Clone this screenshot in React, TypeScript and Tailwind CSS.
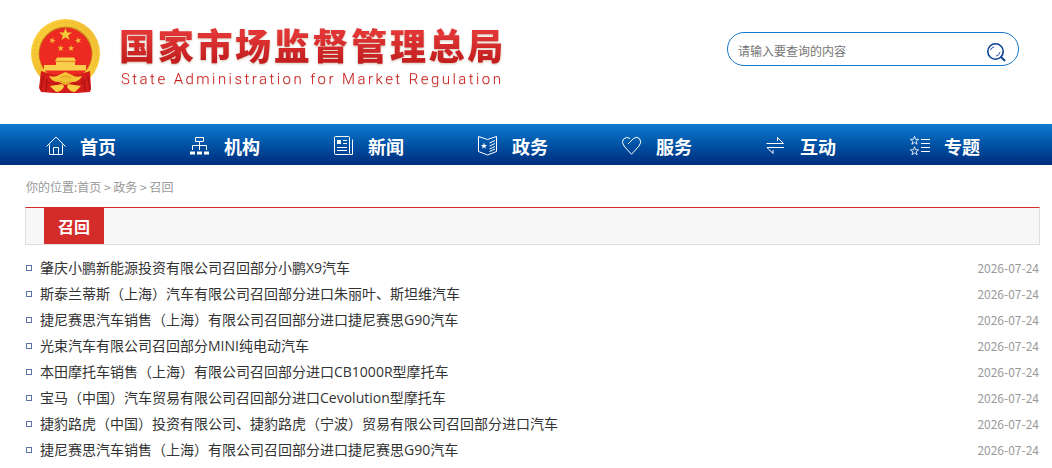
import React from "react";

const STAR =
  "M0,-10 L2.35,-3.24 L9.51,-3.09 L3.8,1.24 L5.88,8.09 L0,4 L-5.88,8.09 L-3.8,1.24 L-9.51,-3.09 L-2.35,-3.24 Z";

function Emblem() {
  return (
    <svg width="72" height="76" viewBox="0 0 72 76" className="block">
      <defs>
        <linearGradient id="gold" x1="0" y1="0" x2="1" y2="1">
          <stop offset="0" stopColor="#fcd33c" />
          <stop offset="0.5" stopColor="#f2bf33" />
          <stop offset="1" stopColor="#f8cf3a" />
        </linearGradient>
      </defs>
      <circle cx="35.5" cy="34.5" r="34.5" fill="url(#gold)" />
      <circle cx="35.5" cy="34.5" r="31" fill="none" stroke="#e3ad2c" strokeWidth="0.7" strokeDasharray="2 2" />
      <circle cx="35.5" cy="34.5" r="27" fill="#c98a1c" />
      <circle cx="35.5" cy="35" r="26.2" fill="#ec2a22" />
      <path d={STAR} transform="translate(35.5 15.6) scale(0.68)" fill="#f5cc38" />
      <path d={STAR} transform="translate(22.3 21.5) scale(0.34) rotate(15)" fill="#f5b838" />
      <path d={STAR} transform="translate(48.2 21.5) scale(0.34) rotate(-15)" fill="#f5b838" />
      <path d={STAR} transform="translate(30.7 29.3) scale(0.34)" fill="#f5b838" />
      <path d={STAR} transform="translate(41.1 29.3) scale(0.34)" fill="#f5b838" />
      <path d="M27 38.5 H44 L46 42 H25 Z M26 42.5 H45 V46 H56 V51.5 H14 V46 H26 Z" fill="#f9ce4a" />
      <path d="M25 42.3 H46" stroke="#d78f24" strokeWidth="0.7" />
      <path d="M11 52 L20 55 L30 56 H41 L51 55 L60 52 L61 69 L60 73 L47 74 H24 L11 73 L9 69 Z" fill="#d41d1b" />
      <path d="M13 57 L11 71 M17 60 L16 72 M58 57 L60 71 M54 60 L55 72" stroke="#a31413" strokeWidth="1.2" />
      <path
        d="M19 57 Q25 59 29 56 L35.5 53 L42 56 Q46 59 52 57 Q49 63 42 63 L35.5 66 L29 63 Q22 63 19 57 Z"
        fill="url(#gold)"
      />
      <path d="M30.5 59 Q35.5 55 40.5 59 M30.5 62 Q35.5 66 40.5 62" stroke="#cf921c" strokeWidth="0.8" fill="none" />
      <path d="M33 65 L20 67 L23 70 L26 73 Q31 73 34 68 Z M38 65 L51 67 L48 70 L45 73 Q40 73 37 68 Z" fill="#f8cd42" />
      <path d="M12 59 Q18 65 28 65 M59 59 Q53 65 43 65" stroke="#b91a16" strokeWidth="1.3" fill="none" />
    </svg>
  );
}

function HomeIcon() {
  return (
    <>
      <path d="M0.5 10.5 L10 1 L19.5 10.5" />
      <path d="M3.5 8.5 V18.5 H16.5 V8.5" />
      <path d="M7.5 18 V11.5 H12.5 V18" />
    </>
  );
}

function OrgIcon() {
  return (
    <>
      <path d="M5.5 1.5 H13.5 V5.5 H5.5 Z M9.5 5.5 V14 M2.5 14 V9.5 H16.5 V14" />
      <path d="M0 15.5 H5 V18.5 H0 Z M7 15.5 H12 V18.5 H7 Z M14 15.5 H19 V18.5 H14 Z" fill="white" stroke="none" />
    </>
  );
}

function NewsIcon() {
  return (
    <>
      <rect x="0.5" y="0.5" width="15" height="18" rx="1" />
      <path d="M15.5 18.5 H18.5 V3.5" />
      <path d="M3 4 H7 V8 H3 Z" fill="white" stroke="none" />
      <path d="M9 4.5 H13 M9 7.5 H13 M3 11.5 H13 M3 14.5 H13" />
    </>
  );
}

function PolicyIcon() {
  return (
    <>
      <path d="M0.5 0.5 L9.5 3.5 L18.5 0.5 V15.5 L9.5 19 L0.5 15.5 Z" />
      <path d="M11.5 7 L17 4.5 M11.5 10 L17 7.5 M11.5 13 L17 10.5 M11.5 15.5 L17 13" />
      <path d={STAR} transform="translate(6 10) scale(0.34)" fill="white" stroke="none" />
    </>
  );
}

function HeartIcon() {
  return (
    <path d="M6 8 L11.5 2.5 Q15 -0.2 17.7 2.8 Q20.2 6.5 17 10 L9.5 18.3 L2 10 Q-1 6 1.5 3 Q4.5 0 8 2.5" />
  );
}

function ExchangeIcon() {
  return (
    <>
      <path d="M0.5 7.5 H17.5 L11.5 1.5 V5" />
      <path d="M18 11.5 H1 L7 17.5 V14" />
    </>
  );
}

function TopicIcon() {
  return (
    <>
      <path d={STAR} transform="translate(4.5 4.7) scale(0.44)" strokeWidth="1.9" />
      <path d={STAR} transform="translate(4.5 15.2) scale(0.44)" strokeWidth="1.9" />
      <path d="M11 3.5 H20 M11 7.5 H20 M11 11.5 H20 M11 15.5 H20" />
    </>
  );
}

const navItems = [
  { name: "首页", icon: HomeIcon },
  { name: "机构", icon: OrgIcon },
  { name: "新闻", icon: NewsIcon },
  { name: "政务", icon: PolicyIcon },
  { name: "服务", icon: HeartIcon },
  { name: "互动", icon: ExchangeIcon },
  { name: "专题", icon: TopicIcon },
];

const recalls = [
  { title: "肇庆小鹏新能源投资有限公司召回部分小鹏X9汽车", date: "2026-07-24" },
  { title: "斯泰兰蒂斯（上海）汽车有限公司召回部分进口朱丽叶、斯坦维汽车", date: "2026-07-24" },
  { title: "捷尼赛思汽车销售（上海）有限公司召回部分进口捷尼赛思G90汽车", date: "2026-07-24" },
  { title: "光束汽车有限公司召回部分MINI纯电动汽车", date: "2026-07-24" },
  { title: "本田摩托车销售（上海）有限公司召回部分进口CB1000R型摩托车", date: "2026-07-24" },
  { title: "宝马（中国）汽车贸易有限公司召回部分进口Cevolution型摩托车", date: "2026-07-24" },
  { title: "捷豹路虎（中国）投资有限公司、捷豹路虎（宁波）贸易有限公司召回部分进口汽车", date: "2026-07-24" },
  { title: "捷尼赛思汽车销售（上海）有限公司召回部分进口捷尼赛思G90汽车", date: "2026-07-24" },
];

function Header() {
  return (
    <header className="flex h-[124px] items-start justify-between pl-[30px] pr-[33px]">
      <div className="flex pt-[19px]">
        <Emblem />
        <div className="ml-[17px] pt-[5px] whitespace-nowrap">
          <h1 className="h-[45px] bg-gradient-to-b from-[#e23636] from-20% to-[#c01a1c] to-90% bg-clip-text text-[36px] leading-[41px] font-black tracking-[2.7px] text-transparent drop-shadow-[0_1px_1px_rgba(150,100,60,0.4)]">
            国家市场监督管理总局
          </h1>
          <p className="ml-[2px] h-[20px] font-['Roboto',sans-serif] text-[15px] leading-[20px] font-light tracking-[2.45px] text-[#cc1818] drop-shadow-[0_1px_0.5px_rgba(150,100,60,0.25)]">
            State Administration for Market Regulation
          </p>
        </div>
      </div>
      <div className="mt-[32px] flex h-[34px] w-[292px] items-center justify-between rounded-full border border-[#1479cc] pr-[12px] pl-[10px]">
        <input
          type="text"
          placeholder="请输入要查询的内容"
          className="w-[200px] pt-[3px] text-xs outline-none placeholder:text-[#757575]"
        />
        <svg width="19" height="19" viewBox="0 0 19 19" fill="none" stroke="#0d4494" className="mt-[6px]">
          <circle cx="8.5" cy="8.5" r="7.7" strokeWidth="1.6" />
          <path d="M13.5 13.5 L18 18" strokeWidth="2" />
          <path d="M3.5 7 Q4.5 4.5 7 4 M9 13 Q12.5 12.5 13 9" strokeWidth="0.9" />
        </svg>
      </div>
    </header>
  );
}

export default function App() {
  return (
    <div className="h-[468px] w-[1052px] overflow-hidden bg-white font-['Noto_Sans_CJK_SC',sans-serif]">
      <Header />
      <nav className="flex h-[41px] bg-gradient-to-b from-[#107bd0] to-[#002c7c] pl-[46px]">
        {navItems.map((item) => {
          const Icon = item.icon;
          return (
            <a key={item.name} className="flex w-[144px] shrink-0 items-center text-lg font-bold text-white">
              <svg width="21" height="20" viewBox="0 0 21 20" fill="none" stroke="white" className="mt-[3px] mr-[13px]">
                <Icon />
              </svg>
              <span className="pt-[2px] leading-none">{item.name}</span>
            </a>
          );
        })}
      </nav>
      <main className="pr-[12px] pl-[25px]">
        <div className="h-[42px] pl-px text-xs leading-[44px] text-[#999]">
          你的位置:首页 &gt; 政务 &gt; 召回
        </div>
        <div className="flex h-[38px] border border-[#ddd] border-t-[#d42b2b] bg-[#f7f7f7] pl-[18px]">
          <h2 className="w-[60px] bg-[#d42b2b] text-center text-base leading-[36px] font-bold text-white">召回</h2>
        </div>
        <ul className="pt-[10px]">
          {recalls.map((item, index) => (
            <li key={index} className="flex h-[26px] items-center pr-px pl-px">
              <span className="mr-[8px] h-[6px] w-[6px] border border-[#5b73a5]" />
              <a className="flex-1 font-['Open_Sans','Noto_Sans_CJK_SC',sans-serif] text-sm leading-[26px] text-[#333]">
                {item.title}
              </a>
              <span className="text-xs leading-[26px] text-[#999]">{item.date}</span>
            </li>
          ))}
        </ul>
      </main>
    </div>
  );
}
